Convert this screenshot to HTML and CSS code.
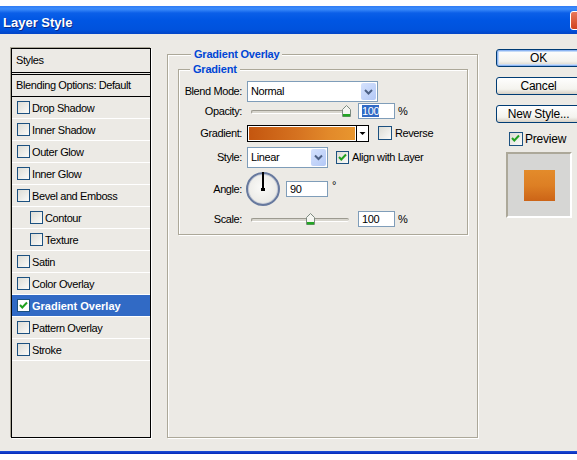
FILE: index.html
```html
<!DOCTYPE html>
<html lang="en">
<head>
  <meta charset="UTF-8">
  <title>Layer Style</title>
  <link rel="stylesheet" href="styles.css">
</head>
<body>
  <div class="window">
    <div class="titlebar">
      <span class="title">Layer Style</span>
      <span class="close"></span>
    </div>

    <div class="client">
      <!-- Styles list -->
      <div class="style-list">
        <div class="list-head">Styles</div>
        <div class="list-blend">Blending Options: Default</div>
        <div class="item"><span class="check"></span>Drop Shadow</div>
        <div class="item"><span class="check"></span>Inner Shadow</div>
        <div class="item"><span class="check"></span>Outer Glow</div>
        <div class="item"><span class="check"></span>Inner Glow</div>
        <div class="item"><span class="check"></span>Bevel and Emboss</div>
        <div class="item sub"><span class="check"></span>Contour</div>
        <div class="item sub"><span class="check"></span>Texture</div>
        <div class="item"><span class="check"></span>Satin</div>
        <div class="item"><span class="check"></span>Color Overlay</div>
        <div class="item selected"><span class="check"><svg viewBox="0 0 11 11" width="11" height="11"><path d="M2 5 L4.3 7.5 L9 2.5" fill="none" stroke="#21a121" stroke-width="2"/></svg></span>Gradient Overlay</div>
        <div class="item"><span class="check"></span>Pattern Overlay</div>
        <div class="item"><span class="check"></span>Stroke</div>
      </div>

      <!-- Gradient Overlay settings -->
      <div class="group outer">
        <div class="legend">Gradient Overlay</div>
        <div class="group inner">
          <div class="legend">Gradient</div>
          <div class="rows">
            <div class="row r-blend">
              <span class="lbl">Blend Mode:</span>
              <div class="combo blend">
                <span class="combo-text">Normal</span>
                <span class="drop"><svg viewBox="0 0 15 19" width="15" height="19"><path d="M4 8 L7.5 11.5 L11 8" fill="none" stroke="#4d6185" stroke-width="2"/></svg></span>
              </div>
            </div>
            <div class="row r-opacity">
              <span class="lbl">Opacity:</span>
              <div class="slider op-slider">
                <span class="track"></span>
                <svg class="thumb" style="left: 93px" viewBox="0 0 9 12" width="9" height="12"><path d="M0.5 4.5 L4.5 0.5 L8.5 4.5 L8.5 11.5 L0.5 11.5 Z" fill="#f5f5f1" stroke="#7c8a80"/><rect x="1" y="9" width="7" height="2.5" fill="#23a523"/></svg>
              </div>
              <span class="field"><span class="sel">100</span></span>
              <span class="unit">%</span>
            </div>
            <div class="row r-gradient">
              <span class="lbl">Gradient:</span>
              <div class="swatch"><span class="ramp"></span><span class="ramp-btn"><svg viewBox="0 0 11 15" width="11" height="15"><path d="M2.5 6 L8.5 6 L5.5 9 Z" fill="#000"/></svg></span></div>
              <span class="check"></span>
              <span class="opt">Reverse</span>
            </div>
            <div class="row r-style">
              <span class="lbl">Style:</span>
              <div class="combo style">
                <span class="combo-text">Linear</span>
                <span class="drop"><svg viewBox="0 0 15 18" width="15" height="18"><path d="M4 7.5 L7.5 11 L11 7.5" fill="none" stroke="#4d6185" stroke-width="2"/></svg></span>
              </div>
              <span class="check"><svg viewBox="0 0 11 11" width="11" height="11"><path d="M2 5 L4.3 7.5 L9 2.5" fill="none" stroke="#21a121" stroke-width="2"/></svg></span>
              <span class="opt">Align with Layer</span>
            </div>
            <div class="row r-angle">
              <span class="lbl">Angle:</span>
              <span class="dial"><span class="hand"></span></span>
              <span class="field angle">90</span>
              <span class="deg">°</span>
            </div>
            <div class="row r-scale">
              <span class="lbl">Scale:</span>
              <div class="slider sc-slider">
                <span class="track"></span>
                <svg class="thumb" style="left: 57px" viewBox="0 0 9 12" width="9" height="12"><path d="M0.5 4.5 L4.5 0.5 L8.5 4.5 L8.5 11.5 L0.5 11.5 Z" fill="#f5f5f1" stroke="#7c8a80"/><rect x="1" y="9" width="7" height="2.5" fill="#23a523"/></svg>
              </div>
              <span class="field">100</span>
              <span class="unit">%</span>
            </div>
          </div>
        </div>
      </div>

      <!-- Buttons and preview -->
      <div class="actions">
        <button class="btn default">OK</button>
        <button class="btn">Cancel</button>
        <button class="btn">New Style...</button>
        <div class="preview-toggle">
          <span class="check"><svg viewBox="0 0 11 11" width="11" height="11"><path d="M2 5 L4.3 7.5 L9 2.5" fill="none" stroke="#21a121" stroke-width="2"/></svg></span>
          <span>Preview</span>
        </div>
        <div class="preview-box"><span class="preview-square"></span></div>
      </div>
    </div>

    <div class="frame-bottom"></div>
  </div>
</body>
</html>
```

FILE: styles.css
```css
body {
  margin: 0;
  width: 577px;
  height: 460px;
  overflow: hidden;
  background: #fff;
  font-family: "Liberation Sans", Arial, sans-serif;
  font-size: 11px;
  letter-spacing: -0.4px;
  color: #000;
}

.window {
  margin-top: 6px;
  width: 577px;
}

.titlebar {
  height: 28px;
  display: flex;
  align-items: center;
  justify-content: space-between;
  background: linear-gradient(#2f7cf5 0, #3d8dfb 3px, #0b5fe8 7px, #0056e3 14px, #0052dc 24px, #0345c6 28px);
  overflow: hidden;
}

.title {
  padding: 4px 0 0 3px;
  color: #fff;
  font-size: 13px;
  font-weight: bold;
  letter-spacing: 0;
  text-shadow: 1px 1px 0 #0a2a8a;
}

.close {
  width: 20px;
  height: 17px;
  margin: 0 -15px 0 0;
  border: 1px solid #fff;
  border-radius: 3px;
  background: linear-gradient(#e8775a, #d2431f);
}

.client {
  height: 417px;
  background: #eceae5;
  display: flex;
  align-items: flex-start;
  padding: 13px 0 0 11px;
  box-sizing: border-box;
}

.client > * {
  flex: none;
}

/* styles list */

.style-list {
  width: 140px;
  height: 390px;
  margin-top: 1px;
  box-sizing: border-box;
  border: 1px solid #000;
  box-shadow: -1px -1px 0 #aca899, 1px 1px 0 #fff;
}

.list-head {
  height: 23px;
  line-height: 22px;
  padding-left: 4px;
  border-bottom: 3px double #000;
}

.list-blend {
  height: 21px;
  line-height: 21px;
  padding-left: 4px;
  border-bottom: 1px solid #000;
}

.item {
  height: 21px;
  display: flex;
  align-items: center;
  gap: 2px;
  padding-left: 5px;
  border-bottom: 1px solid #fff;
}

.item.sub {
  padding-left: 18px;
}

.item.selected {
  background: #316ac5;
  color: #fff;
  font-weight: bold;
  letter-spacing: 0;
}

.check {
  width: 11px;
  height: 11px;
  flex: none;
  border: 1px solid #1c5180;
  background: linear-gradient(135deg, #dcdcd5, #fbfbf9);
  display: inline-flex;
}

.item.selected .check {
  background: #fff;
}

/* group boxes */

.group {
  box-sizing: border-box;
  border: 1px solid #aca899;
  box-shadow: inset 1px 1px 0 #fff, 1px 1px 0 #fff;
}

.group.outer {
  width: 311px;
  height: 384px;
  margin: 7px 0 0 16px;
  padding: 0 10px 0 10px;
}

.legend {
  width: fit-content;
  height: 13px;
  line-height: 13px;
  margin: -7px 0 0 13px;
  padding: 0 3px;
  background: #eceae5;
  color: #0046d5;
  font-weight: bold;
  letter-spacing: -0.2px;
}

.group.inner {
  margin-top: 8px;
  width: 290px;
}

.group.inner .legend {
  margin-left: 11px;
}

.rows {
  padding: 4px 0 5px 0;
}

.row {
  display: flex;
  align-items: center;
  height: 22px;
}

.lbl {
  width: 63px;
  flex: none;
  text-align: right;
  margin-right: 5px;
}

.r-opacity { height: 18px; }
.r-gradient { height: 20px; margin-top: 3px; }
.r-style { height: 24px; margin-top: 2px; }
.r-angle { height: 40px; }
.r-scale { height: 20px; }

/* combo boxes */

.combo {
  height: 21px;
  box-sizing: border-box;
  border: 1px solid #7f9db9;
  background: #fff;
  display: flex;
  align-items: center;
  justify-content: space-between;
}

.combo.blend { width: 131px; }
.combo.style { width: 81px; height: 21px; }

.combo-text {
  padding-left: 3px;
}

.drop {
  width: 15px;
  height: 17px;
  margin-right: 1px;
  border-radius: 2px;
  background: linear-gradient(135deg, #d5e2fd, #b3c8f6);
  display: flex;
  align-items: center;
}

/* sliders */

.slider {
  position: relative;
  height: 14px;
  flex: none;
}

.op-slider { width: 106px; margin-left: 2px; }
.sc-slider { width: 106px; margin-left: 2px; }

.track {
  display: block;
  margin: 6px 0 0 2px;
  width: 97px;
  height: 2px;
  border-top: 1px solid #9c9a90;
  border-left: 1px solid #9c9a90;
  border-bottom: 1px solid #fff;
  border-radius: 2px;
  background: #d8d6ce;
}

.thumb {
  position: absolute;
  top: 1px;
}

.field {
  width: 37px;
  height: 16px;
  box-sizing: border-box;
  border: 1px solid #7f9db9;
  background: #fff;
  line-height: 14px;
  padding-left: 3px;
  flex: none;
}

.op-slider + .field,
.sc-slider + .field {
  margin-left: 3px;
}

.sel {
  background: #316ac5;
  color: #fff;
}

.unit {
  margin-left: 3px;
}

/* gradient swatch */

.swatch {
  width: 122px;
  height: 17px;
  box-sizing: border-box;
  border: 1px solid #000;
  display: flex;
}

.ramp {
  flex: 1;
  border: 1px solid #fff;
  background: linear-gradient(to right, #c4560f, #d57220 45%, #e2892a 75%, #e8962f);
}

.ramp-btn {
  width: 11px;
  border-left: 1px solid #000;
  background: #fff;
  display: flex;
}

.r-gradient .check {
  margin-left: 9px;
  width: 12px;
  height: 12px;
}

.opt {
  margin-left: 3px;
}

.r-style .check {
  margin-left: 8px;
}

/* angle dial */

.dial {
  position: relative;
  width: 30px;
  height: 30px;
  flex: none;
  margin-left: -1px;
  border: 2px solid #67799e;
  border-radius: 50%;
  background: radial-gradient(circle at 45% 45%, #fafaf8, #e4e3de);
  box-shadow: inset 0 0 0 1px #c8cdd8;
}

.hand {
  position: absolute;
  left: 14px;
  top: -2px;
  width: 1.5px;
  height: 17px;
  background: #000;
}

.hand::after {
  content: "";
  position: absolute;
  left: -1px;
  bottom: -2px;
  width: 3.5px;
  height: 3.5px;
  background: #000;
}

.field.angle {
  width: 42px;
  margin-left: 6px;
}

.deg {
  margin: -8px 0 0 4px;
}

/* right column */

.actions {
  width: 85px;
  margin: 2px 0 0 18px;
  display: flex;
  flex-direction: column;
}

.btn {
  width: 85px;
  height: 18px;
  margin: 0 0 10px 0;
  padding: 0;
  font-family: "Liberation Sans", Arial, sans-serif;
  font-size: 12px;
  letter-spacing: -0.2px;
  color: #000;
  border: 1px solid #003c74;
  border-radius: 3px;
  background: linear-gradient(#fefefe, #f4f3ee 70%, #d6d0c5);
  line-height: 15px;
}

.btn.default {
  box-shadow: inset 0 0 0 1px #8cb4f2, inset 0 0 0 2px #c5dbf7;
}

.preview-toggle {
  display: flex;
  align-items: center;
  gap: 2px;
  margin: -2px 0 0 13px;
  font-size: 12px;
  letter-spacing: -0.2px;
  height: 15px;
}

.preview-toggle .check {
  width: 12px;
  height: 12px;
}

.preview-box {
  width: 66px;
  height: 66px;
  box-sizing: border-box;
  margin: 6px 0 0 10px;
  border: 2px solid #aca899;
  border-right-color: #fff;
  border-bottom-color: #fff;
  background: #d6d6d4;
  display: flex;
  align-items: center;
  justify-content: center;
}

.preview-square {
  width: 31px;
  height: 31px;
  background: linear-gradient(#e38b2b, #dd7f24 50%, #cc6417);
}

.frame-bottom {
  height: 3px;
  background: linear-gradient(#1d4fd8, #0629b8);
}
```
